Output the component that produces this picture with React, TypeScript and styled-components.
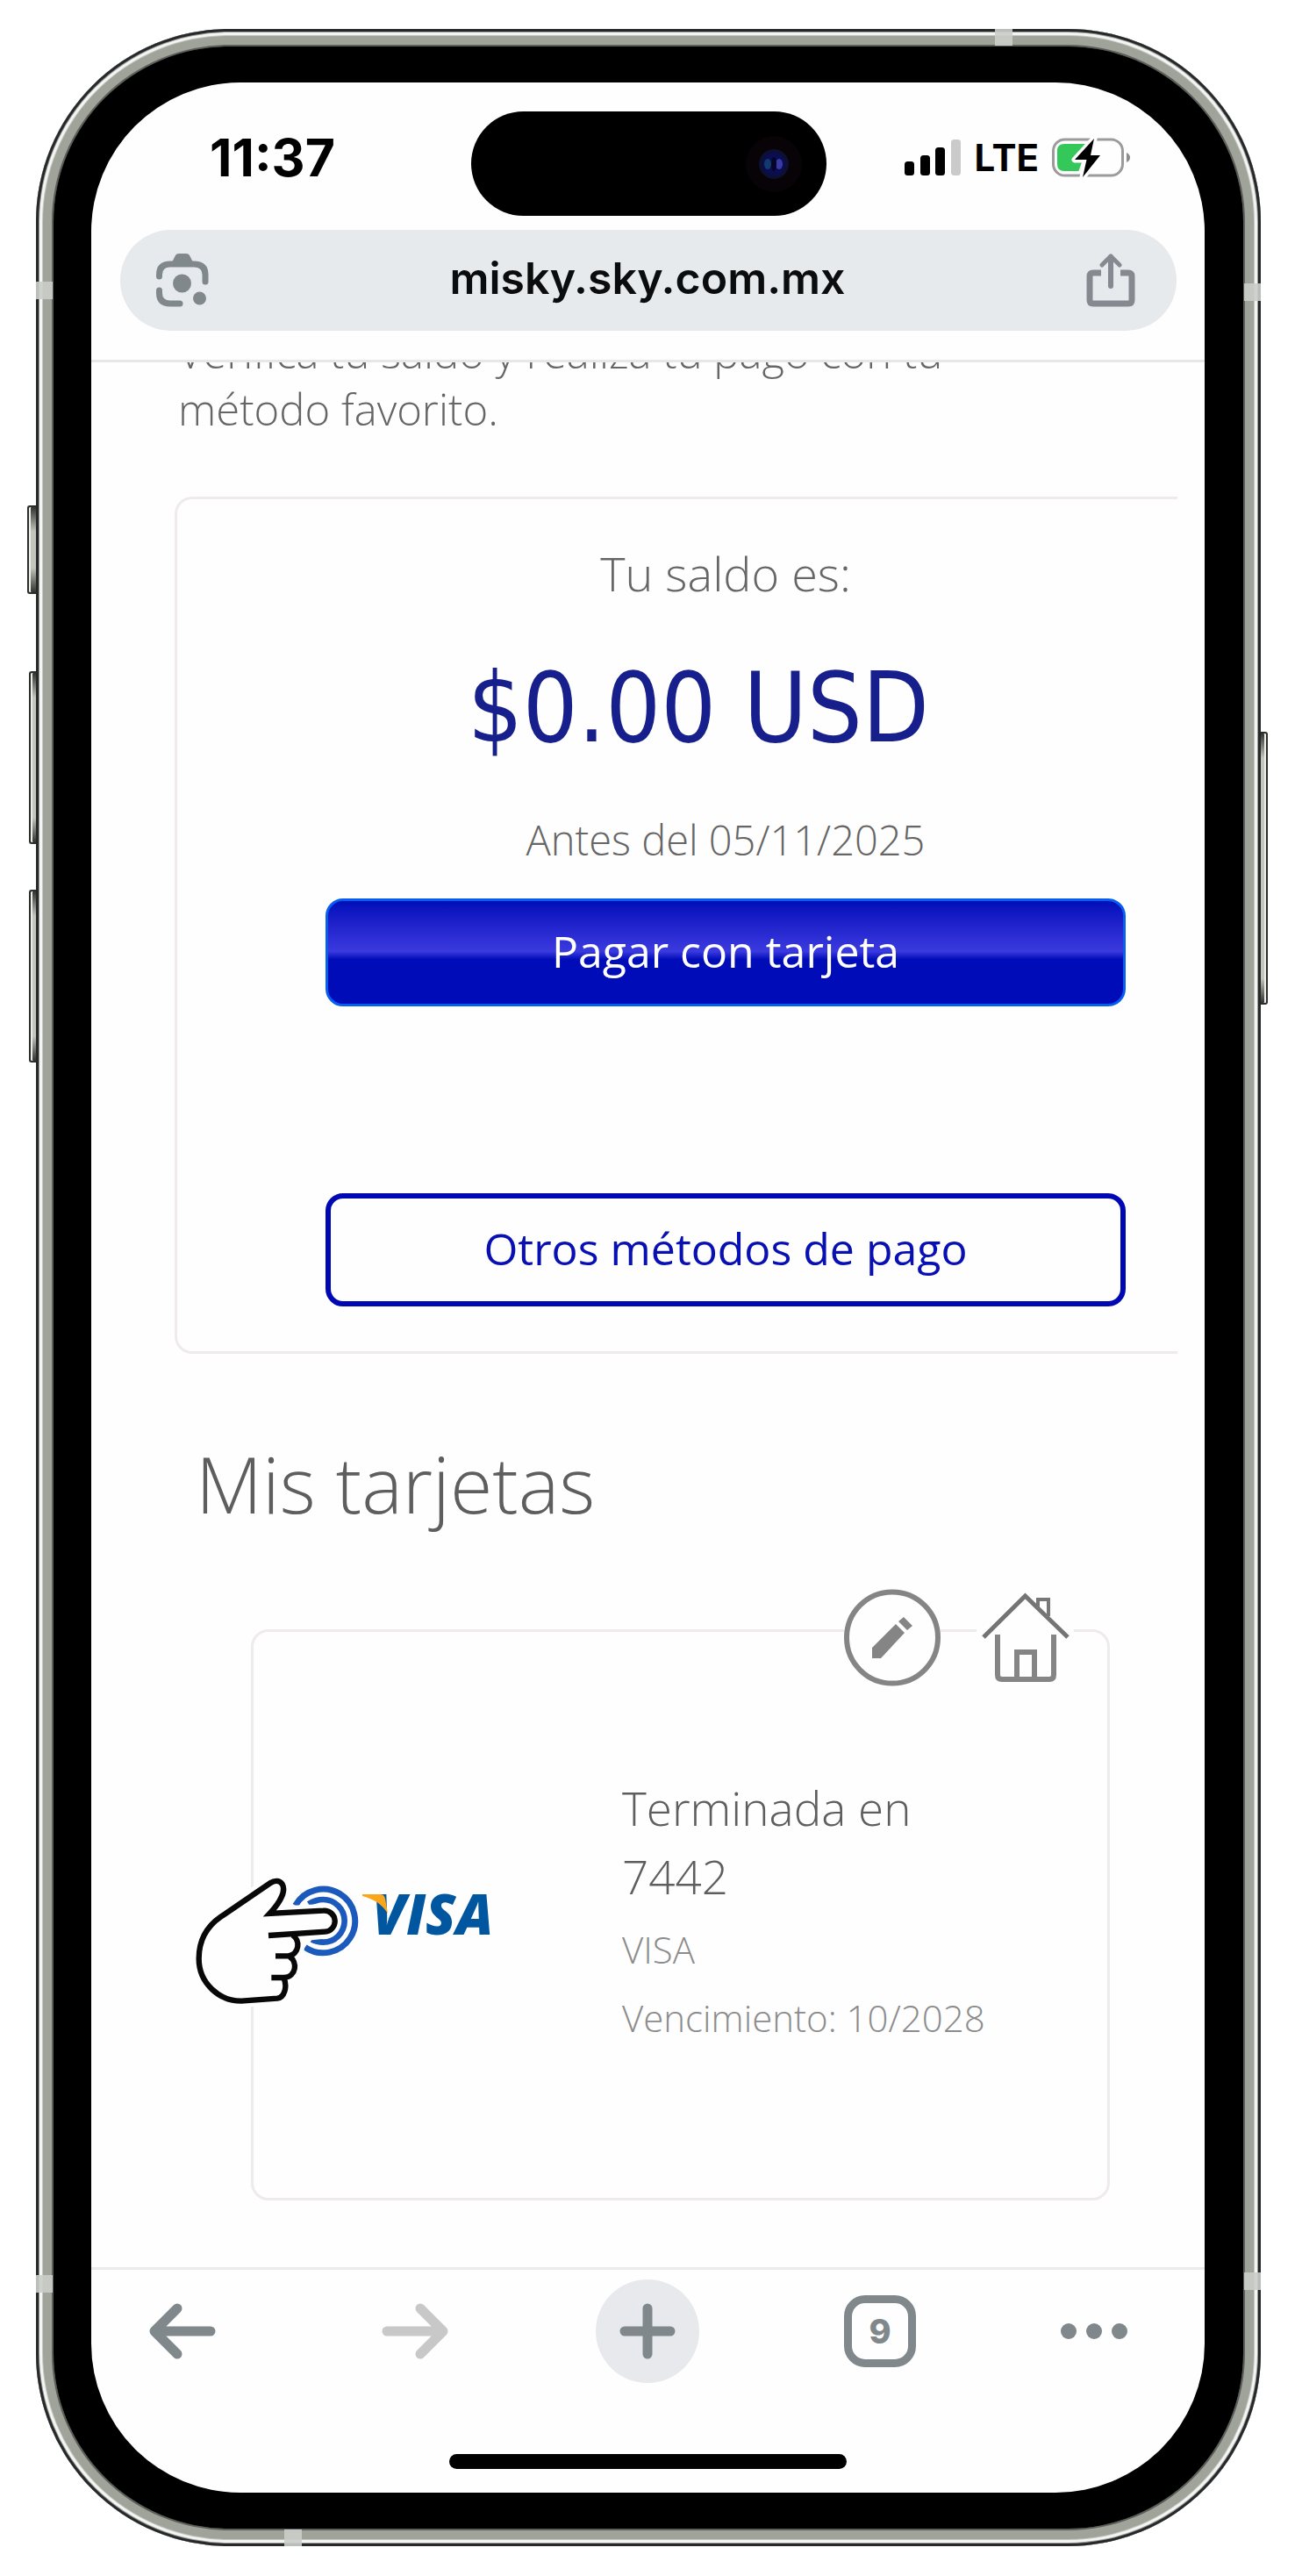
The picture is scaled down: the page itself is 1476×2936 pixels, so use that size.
import React from "react";
import styled, { createGlobalStyle } from "styled-components";

const GlobalStyle = createGlobalStyle`
  *, *::before, *::after { box-sizing: border-box; }
  body { margin: 0; background: #ffffff; }
  button, input { font: inherit; margin: 0; }
`;

const ui = `Inter, "Liberation Sans", sans-serif`;
const brand = `"Open Sans", "Noto Sans", sans-serif`;

const Page = styled.div`
  padding: 33px 39px 33px 41px;
`;

const Phone = styled.div`
  position: relative;
  padding: 20px;
  border-radius: 220px;
  background: #a0a39a;
  box-shadow:
    inset 0 0 0 3px #26282a,
    inset 0 0 0 4px #969997,
    inset 0 0 0 7px #f4f4f2,
    inset 0 0 0 8px #c5c7c2,
    inset 0 0 0 18px #a0a39a,
    inset 0 0 0 20px #5c5e59;
`;

const SideKey = styled.span<{ $side: "left" | "right"; $top: number; $h: number; $w?: number }>`
  position: absolute;
  ${(p) => p.$side}: -${(p) => p.$w ?? 8}px;
  top: ${(p) => p.$top}px;
  width: ${(p) => p.$w ?? 8}px;
  height: ${(p) => p.$h}px;
  border: 2px solid #2c2d2b;
  border-${(p) => (p.$side === "left" ? "right" : "left")}: 0;
  border-radius: ${(p) => (p.$side === "left" ? "3px 0 0 3px" : "0 3px 3px 0")};
  background: linear-gradient(#33342f, #c4c5bc 28px, #c4c5bc calc(100% - 28px), #33342f);
  box-shadow: inset ${(p) => (p.$side === "left" ? 2 : -2)}px 0 0 #ecece8;
`;

const Antenna = styled.span<{ $edge: "left" | "right" | "top" | "bottom"; $at: number }>`
  position: absolute;
  ${(p) => p.$edge}: 0;
  ${(p) =>
    p.$edge === "left" || p.$edge === "right"
      ? `top: ${p.$at}px; width: 19px; height: 20px;`
      : `left: ${p.$at}px; width: 20px; height: 19px;`}
  background: rgba(203, 205, 201, 0.9);
`;

const Bezel = styled.div`
  padding: 41px 44px 41px 43px;
  border-radius: 200px;
  background: #000000;
`;

const Screen = styled.div`
  overflow: hidden;
  border-radius: 170px;
  background: #fefefe;
`;

const BrowserHeader = styled.header`
  padding: 33px 32px 33px 33px;
  border-bottom: 3px solid #e7e7e7;
  font-family: ${ui};
`;

const StatusBar = styled.div`
  display: grid;
  grid-template-columns: 1fr 405px 1fr;
  align-items: center;
  margin-bottom: 16px;
  color: #000000;
`;

const Clock = styled.time`
  padding: 0 0 13px 102px;
  font-size: 59px;
  line-height: 60px;
  font-weight: 700;
`;

const Island = styled.div`
  display: flex;
  align-items: center;
  justify-content: flex-end;
  height: 119px;
  padding-right: 28px;
  border-radius: 60px;
  background: #000000;
`;

const Signals = styled.div`
  display: flex;
  align-items: center;
  justify-content: flex-end;
  gap: 15px;
  padding: 0 52px 13px 0;
  font-size: 42px;
  line-height: 44px;
  font-weight: 700;
`;

const AddressBar = styled.div`
  display: flex;
  align-items: center;
  height: 115px;
  padding: 0 47px 0 41px;
  border-radius: 58px;
  background: #e6eaed;
`;

const Address = styled.input`
  flex: 1;
  min-width: 0;
  padding: 0 0 6px;
  border: 0;
  outline: 0;
  background: transparent;
  color: #0b0c0d;
  font-size: 50px;
  line-height: 64px;
  font-weight: 600;
  text-align: center;
`;

const IconButton = styled.button`
  display: flex;
  padding: 0;
  border: 0;
  background: transparent;
  color: #80888c;
  cursor: pointer;
`;

const Content = styled.main`
  overflow: hidden;
  padding: 0 0 76px 95px;
  font-family: ${brand};
  font-weight: 300;
  color: #5e5e5e;
`;

const Intro = styled.p`
  max-width: 960px;
  margin: -44px 0 67px;
  padding-left: 4px;
  font-size: 49px;
  line-height: 65px;
  color: #666666;
`;

const BalanceCard = styled.section`
  display: flex;
  flex-direction: column;
  margin-right: 31px;
  padding: 49px 59px 51px 169px;
  border: 3px solid #efebeb;
  border-right: 0;
  border-radius: 20px 0 0 20px;
  text-align: center;
  color: #666666;
`;

const BalanceLabel = styled.p`
  margin: 0;
  font-size: 54px;
  line-height: 70px;
`;

const Amount = styled.p`
  margin: 54px 62px 53px 0;
  font-family: "DejaVu Sans Condensed", "DejaVu Sans", sans-serif;
  font-weight: 400;
  font-size: 110px;
  line-height: 130px;
  color: #161f8c;
  white-space: nowrap;
`;

const DueDate = styled.p`
  margin: 0 0 34px;
  font-size: 47px;
  line-height: 65px;
`;

const PayButton = styled.button<{ $outlined?: boolean }>`
  width: 100%;
  height: ${(p) => (p.$outlined ? 129 : 123)}px;
  margin-top: ${(p) => (p.$outlined ? 213 : 0)}px;
  padding: 0 0 2px;
  border: ${(p) => (p.$outlined ? "6px solid #0008b4" : "3px solid #075df0")};
  border-radius: 20px;
  background: ${(p) =>
    p.$outlined
      ? "#fefefe"
      : "linear-gradient(#000fb9 0%, #1d20c9 20%, #3a3ade 49%, #000cb8 57%, #000cb8 100%)"};
  color: ${(p) => (p.$outlined ? "#0810b4" : "#ffffff")};
  font-size: 50px;
  line-height: 65px;
  font-weight: 400;
  cursor: pointer;
`;

const SectionTitle = styled.h2`
  margin: 91px 0 109px;
  padding-left: 24px;
  font-size: 88px;
  line-height: 114px;
  font-weight: 300;
`;

const SavedCard = styled.article`
  position: relative;
  display: grid;
  grid-template-columns: 148px 1fr;
  column-gap: 149px;
  align-items: center;
  margin: 0 108px 0 87px;
  padding: 162px 48px 166px 123px;
  border: 3px solid #efebeb;
  border-radius: 20px;
`;

const CardActions = styled.div`
  position: absolute;
  top: -49px;
  right: 38px;
  display: flex;
  gap: 41px;
`;

const CardAction = styled(IconButton)`
  background: #fefefe;
  border-radius: 55px;
  color: #858585;
`;

const Pointer = styled.svg`
  position: absolute;
  left: -69px;
  top: 279px;
`;

const VisaMark = styled.div`
  position: relative;
  padding-left: 12px;
  color: #00579f;
  font-size: 63px;
  line-height: 84px;
  font-weight: 800;
  font-style: italic;
  white-space: nowrap;
`;

const VisaWing = styled.svg`
  position: absolute;
  left: 1px;
  top: 20px;
`;

const CardEnding = styled.h3`
  max-width: 400px;
  margin: 0 0 5px;
  font-size: 53px;
  line-height: 78px;
  font-weight: 300;
`;

const CardDetail = styled.p`
  margin: 0;
  font-size: 42px;
  line-height: 78px;
  color: #8c8c8c;
`;

const BrowserFooter = styled.footer`
  border-top: 3px solid #ebebeb;
  font-family: ${ui};
`;

const Toolbar = styled.nav`
  display: flex;
  justify-content: space-between;
  padding: 11px 88px 81px 45px;
`;

const Tool = styled(IconButton)<{ $filled?: boolean; $narrow?: boolean }>`
  align-items: center;
  justify-content: center;
  width: ${(p) => (p.$narrow ? 76 : 118)}px;
  height: 118px;
  border-radius: 59px;
  background: ${(p) => (p.$filled ? "#e7e9ec" : "transparent")};

  &:disabled { color: #c8c8c8; }
`;

const TabCount = styled.span`
  display: flex;
  align-items: center;
  justify-content: center;
  width: 82px;
  height: 82px;
  border: 9px solid #80888c;
  border-radius: 24px;
  font-size: 38px;
  line-height: 44px;
  font-weight: 800;
`;

const HomeIndicator = styled.div`
  width: 453px;
  height: 17px;
  margin: 0 auto 27px;
  border-radius: 9px;
  background: #000000;
`;

const Camera = () => (
  <svg width="64" height="66" viewBox="0 0 64 66" aria-hidden="true">
    <circle cx="32" cy="33" r="32" fill="#080306" />
    <circle cx="32" cy="33" r="17" fill="#0d1030" />
    <circle cx="32" cy="33" r="13" fill="#0a0d52" />
    <ellipse cx="25" cy="33" rx="4" ry="6" fill="#123b6d" />
    <ellipse cx="38" cy="33" rx="4" ry="6" fill="#3a3aa4" />
    <ellipse cx="32" cy="33" rx="3" ry="8" fill="#050528" />
  </svg>
);

const CellBars = () => (
  <svg width="65" height="42" viewBox="0 0 65 42" aria-hidden="true">
    <rect x="0" y="25" width="11" height="16" rx="3.5" />
    <rect x="18" y="18" width="11" height="23" rx="3.5" />
    <rect x="35" y="9" width="11" height="32" rx="3.5" />
    <rect x="53" y="0" width="11" height="41" rx="3.5" fill="#cacaca" />
  </svg>
);

const Battery = () => (
  <svg width="90" height="46" viewBox="0 0 90 46" aria-hidden="true">
    <rect x="1.5" y="2" width="79" height="41" rx="13" fill="none" stroke="#9b9b9b" strokeWidth="3" />
    <path d="M14 7H42V38H14Q6 38 6 30V15Q6 7 14 7Z" fill="#34c759" />
    <path d="M42 6H50V39H30Z" fill="#fefefe" />
    <path
      d="M48 1 26 25H39.500L35 45 55 20H44Z"
      stroke="#fefefe"
      strokeWidth="7"
      paintOrder="stroke"
      strokeLinejoin="round"
    />
    <path d="M85 17Q89 19 89 22.500T85 28Z" fill="#8c8c8c" />
  </svg>
);

const LensIcon = () => (
  <svg width="60" height="62" viewBox="0 0 60 62" fill="none" stroke="currentColor" strokeWidth="7" strokeLinecap="round" aria-hidden="true">
    <path d="M3.500 26V24Q3.500 12 16 12H43Q56 12 56 24V32M3.500 42V45Q3.500 57 16 57H27" />
    <path d="M16 14 22 2Q23 0 26 0H34Q37 0 38 2L44 14Z" fill="currentColor" stroke="none" />
    <circle cx="29.500" cy="34" r="10.500" fill="currentColor" stroke="none" />
    <circle cx="49.500" cy="51" r="7.500" fill="currentColor" stroke="none" />
  </svg>
);

const ShareIcon = () => (
  <svg width="56" height="62" viewBox="0 0 56 62" fill="none" stroke="#868a90" strokeWidth="7" strokeLinecap="round" strokeLinejoin="round" aria-hidden="true">
    <path d="M17 22H8Q4 22 4 26V53Q4 57 8 57H48Q52 57 52 53V26Q52 22 48 22H39" strokeLinecap="butt" />
    <path d="M28 37V4" strokeWidth="6" />
    <path d="M18 13 28 3 38 13" strokeWidth="5" />
  </svg>
);

const EditIcon = () => (
  <svg width="110" height="111" viewBox="0 0 110 111" aria-hidden="true">
    <circle cx="55" cy="55.500" r="52" fill="#fefefe" stroke="currentColor" strokeWidth="6" />
    <path d="M32 79V67L59 40 69 50 42 79ZM62 37 68 32 78 42 72 47Z" fill="currentColor" />
  </svg>
);

const HouseIcon = () => (
  <svg width="111" height="111" viewBox="0 0 111 111" fill="none" stroke="currentColor" strokeWidth="5" aria-hidden="true">
    <path d="M0 36H111V60H0Z" fill="#fefefe" stroke="none" />
    <path d="M8 55 55.500 8 104 55" stroke="#747474" strokeLinejoin="miter" />
    <path d="M24 52V98Q24 103 29 103H83Q88 103 88 98V52M46 103V72H66V103" strokeWidth="6" />
    <path d="M70 22V12H82V31" stroke="#777777" strokeWidth="4" />
  </svg>
);

const PointingHand = () => (
  <Pointer width="190" height="148" viewBox="120 175 570 444" fill="none" aria-hidden="true">
    <path d="M470 273A109 109 0 1 1 503 416" stroke="#1b59bd" strokeWidth="21" />
    <path d="M515 268Q540 253 565 253A73 73 0 0 1 565 399Q543 399 526 390" stroke="#1b59bd" strokeWidth="20" />
    <path
      d="M378 301C420 260 440 220 425 200C415 188 397 188 385 196L215 312C160 350 140 400 140 455C140 540 210 600 285 600L408 591C432 588 442 555 430 522C468 516 476 470 452 448C484 438 488 392 462 376L572 364A37 37 0 0 0 566 291Z"
      fill="#fefefe"
      stroke="#fefefe"
      strokeWidth="46"
      strokeLinejoin="round"
    />
    <g stroke="#080808" strokeWidth="19">
      <path d="M378 376 572 363A36 36 0 0 0 566 291L382 301C420 260 438 222 425 200C415 186 397 188 385 196L215 312C160 350 140 400 140 455C140 540 210 600 285 600L408 591C432 588 444 552 430 520" />
      <path d="M388 520H432C474 516 478 466 450 448" />
      <path d="M402 446H446C484 440 488 392 460 374" />
    </g>
  </Pointer>
);

const ArrowIcon = ({ forward = false }: { forward?: boolean }) => (
  <svg width="76" height="64" viewBox="0 0 76 64" fill="none" stroke="currentColor" strokeWidth="11" strokeLinecap="round" strokeLinejoin="round" aria-hidden="true">
    <path d={forward ? "M6 32H68M44 6 70 32 44 58" : "M70 32H8M32 6 6 32 32 58"} />
  </svg>
);

const PlusIcon = () => (
  <svg width="64" height="64" viewBox="0 0 64 64" stroke="currentColor" strokeWidth="11" strokeLinecap="round" aria-hidden="true">
    <path d="M32 6V58M6 32H58" />
  </svg>
);

const MoreIcon = () => (
  <svg width="76" height="20" viewBox="0 0 76 20" fill="currentColor" aria-hidden="true">
    <circle cx="9" cy="10" r="9" />
    <circle cx="38" cy="10" r="9" />
    <circle cx="67" cy="10" r="9" />
  </svg>
);

export default function App() {
  return (
    <>
      <GlobalStyle />
      <Page>
        <Phone>
          <SideKey $side="left" $top={543} $h={101} $w={10} />
          <SideKey $side="left" $top={732} $h={197} />
          <SideKey $side="left" $top={981} $h={197} />
          <SideKey $side="right" $top={801} $h={311} />
          <Antenna $edge="top" $at={1093} />
          <Antenna $edge="left" $at={288} />
          <Antenna $edge="right" $at={290} />
          <Antenna $edge="left" $at={2560} />
          <Antenna $edge="right" $at={2557} />
          <Antenna $edge="bottom" $at={283} />
          <Bezel>
            <Screen>
              <BrowserHeader>
                <StatusBar>
                  <Clock>11:37</Clock>
                  <Island>
                    <Camera />
                  </Island>
                  <Signals>
                    <CellBars />
                    <span>LTE</span>
                    <Battery />
                  </Signals>
                </StatusBar>
                <AddressBar>
                  <IconButton aria-label="Buscar con la cámara">
                    <LensIcon />
                  </IconButton>
                  <Address aria-label="Dirección" readOnly value="misky.sky.com.mx" />
                  <IconButton aria-label="Compartir">
                    <ShareIcon />
                  </IconButton>
                </AddressBar>
              </BrowserHeader>

              <Content>
                <Intro>Verifica tu saldo y realiza tu pago con tu método favorito.</Intro>
                <BalanceCard>
                  <BalanceLabel>Tu saldo es:</BalanceLabel>
                  <Amount>$0.00 USD</Amount>
                  <DueDate>Antes del 05/11/2025</DueDate>
                  <PayButton>Pagar con tarjeta</PayButton>
                  <PayButton $outlined>Otros métodos de pago</PayButton>
                </BalanceCard>

                <SectionTitle>Mis tarjetas</SectionTitle>
                <SavedCard>
                  <CardActions>
                    <CardAction aria-label="Editar tarjeta">
                      <EditIcon />
                    </CardAction>
                    <CardAction aria-label="Tarjeta domiciliada">
                      <HouseIcon />
                    </CardAction>
                  </CardActions>
                  <VisaMark>
                    VISA
                    <VisaWing width="30" height="24" viewBox="0 0 30 24" aria-hidden="true">
                      <path d="M0 0H20Q25 0 26 5L29 22Q20 7 0 2Z" fill="#faa61a" />
                    </VisaWing>
                  </VisaMark>
                  <div>
                    <CardEnding>
                      Terminada en
                      <br />
                      7442
                    </CardEnding>
                    <CardDetail>VISA</CardDetail>
                    <CardDetail>Vencimiento: 10/2028</CardDetail>
                  </div>
                  <PointingHand />
                </SavedCard>
              </Content>

              <BrowserFooter>
                <Toolbar aria-label="Navegador">
                  <Tool aria-label="Atrás">
                    <ArrowIcon />
                  </Tool>
                  <Tool aria-label="Adelante" disabled>
                    <ArrowIcon forward />
                  </Tool>
                  <Tool aria-label="Nueva pestaña" $filled>
                    <PlusIcon />
                  </Tool>
                  <Tool aria-label="Pestañas abiertas">
                    <TabCount>9</TabCount>
                  </Tool>
                  <Tool aria-label="Más opciones" $narrow>
                    <MoreIcon />
                  </Tool>
                </Toolbar>
                <HomeIndicator />
              </BrowserFooter>
            </Screen>
          </Bezel>
        </Phone>
      </Page>
    </>
  );
}
